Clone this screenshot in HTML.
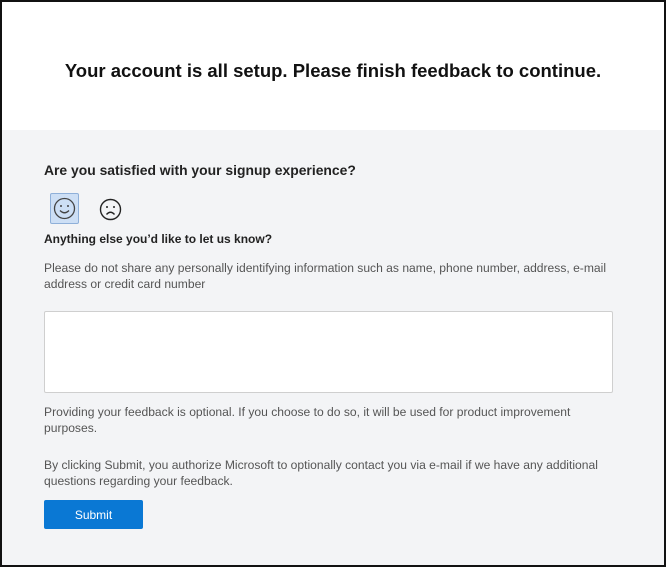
<!DOCTYPE html>
<html><head><meta charset="utf-8"><style>
*{margin:0;padding:0;box-sizing:border-box}
body{width:666px;height:567px;font-family:"Liberation Sans",Arial,sans-serif;background:#fff;position:relative;overflow:hidden}
.frame{position:absolute;left:0;top:0;width:666px;height:567px;border:2px solid #111;z-index:5;pointer-events:none}
.top{position:absolute;left:0;top:0;width:666px;height:130px;background:#fff}
.gray{position:absolute;left:0;top:130px;width:666px;height:437px;background:#f3f4f6}
.t{position:absolute;white-space:nowrap}
h1{position:absolute;left:0;width:666px;top:60px;text-align:center;font-size:18.5px;font-weight:bold;color:#111;white-space:nowrap}
.q{left:44px;top:162px;font-size:13.9px;font-weight:bold;color:#222}
.q2{left:44px;top:232px;font-size:12px;font-weight:bold;color:#222}
.g{left:44px;font-size:12.1px;color:#555;line-height:16px}
.sel{position:absolute;left:50px;top:193px;width:29px;height:31px;background:#cddff5;border:1px solid #8fb0d9;border-radius:2px}
.ta{position:absolute;left:44px;top:311px;width:569px;height:82px;background:#fff;border:1px solid #cfcfcf;border-radius:2px}
.btn{position:absolute;left:44px;top:500px;width:99px;height:29px;background:#0a78d4;border-radius:2px;color:#fff;font-size:12px;text-align:center;line-height:30px}
</style></head><body>
<div class="top"></div>
<div class="gray"></div>
<h1>Your account is all setup. Please finish feedback to continue.</h1>
<div class="t q">Are you satisfied with your signup experience?</div>
<div class="sel"></div>
<svg style="position:absolute;left:52px;top:196px" width="25" height="25" viewBox="0 0 25 25"><circle cx="12.5" cy="12.5" r="10" fill="none" stroke="#444" stroke-width="1.3"/><circle cx="9" cy="10" r="1" fill="#444"/><circle cx="16" cy="10" r="1" fill="#444"/><path d="M8 14.5 Q12.5 19 17 14.5" fill="none" stroke="#444" stroke-width="1.3"/></svg>
<svg style="position:absolute;left:98px;top:197px" width="25" height="25" viewBox="0 0 25 25"><circle cx="12.5" cy="12.5" r="10" fill="none" stroke="#222" stroke-width="1.4"/><circle cx="9" cy="10" r="1" fill="#222"/><circle cx="16" cy="10" r="1" fill="#222"/><path d="M8.5 17.5 Q12.5 13 16.5 17.5" fill="none" stroke="#222" stroke-width="1.4"/></svg>
<div class="t q2">Anything else you’d like to let us know?</div>
<div class="t g" style="top:260px">Please do not share any personally identifying information such as name, phone number, address, e-mail<br>address or credit card number</div>
<div class="ta"></div>
<div class="t g" style="top:404px">Providing your feedback is optional. If you choose to do so, it will be used for product improvement<br>purposes.</div>
<div class="t g" style="top:457px">By clicking Submit, you authorize Microsoft to optionally contact you via e-mail if we have any additional<br>questions regarding your feedback.</div>
<div class="btn">Submit</div>
<div class="frame"></div>
</body></html>
